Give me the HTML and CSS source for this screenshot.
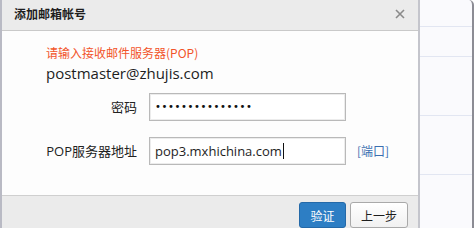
FILE: index.html
```html
<!DOCTYPE html>
<html>
<head>
<meta charset="utf-8">
<link rel="stylesheet" href="styles.css">
</head>
<body>
<div class="page">
  <div class="dialog">
    <div class="titlebar">
      <span class="title">添加邮箱帐号</span>
      <svg class="close" width="10" height="10" viewBox="0 0 10 10"><path d="M1 1L9 9M9 1L1 9" stroke="#8a8a8a" stroke-width="1.6" fill="none"/></svg>
    </div>
    <div class="content">
      <div class="hint">请输入接收邮件服务器(POP)</div>
      <div class="email">postmaster@zhujis.com</div>
      <div class="row first">
        <label class="label">密码</label>
        <div class="input"><span class="dots">•••••••••••••••</span></div>
      </div>
      <div class="row">
        <label class="label">POP服务器地址</label>
        <div class="input"><span class="val">pop3.mxhichina.com</span><span class="caret"></span></div>
        <a class="port">[端口]</a>
      </div>
    </div>
    <div class="footer">
      <button class="btn primary">验证</button>
      <button class="btn">上一步</button>
    </div>
  </div>
  <div class="side"></div>
</div>
</body>
</html>
```
FILE: styles.css
```css
html, body {
  margin: 0;
  padding: 0;
  background: #ffffff;
}
body {
  width: 475px;
  height: 228px;
  overflow: hidden;
  font-family: "Open Sans", "Noto Sans CJK SC", sans-serif;
  color: #222;
}
.page {
  display: flex;
  height: 228px;
}
.dialog {
  width: 416px;
  border-left: 2px solid #b9bac4;
  display: flex;
  flex-direction: column;
  flex-shrink: 0;
}
.titlebar {
  height: 30px;
  background: #ebebeb;
  border-bottom: 1px solid #c9c9c9;
  display: flex;
  align-items: center;
  justify-content: space-between;
  padding: 0 13px 0 12px;
}
.title {
  font-family: "Noto Sans CJK SC", sans-serif;
  font-size: 12px;
  font-weight: bold;
  color: #1e1e1e;
  position: relative;
  top: -1px;
}
.close {
  display: block;
  position: relative;
  top: -1px;
}
.content {
  height: 167px;
  background: #fdfdfd;
  padding: 14px 0 0 44px;
  box-sizing: border-box;
}
.hint {
  font-family: "Noto Sans CJK SC", sans-serif;
  font-size: 12px;
  line-height: 16px;
  color: #f2542a;
}
.email {
  font-size: 15px;
  line-height: 20px;
  margin-top: 2px;
  color: #1e1e1e;
}
.row {
  display: flex;
  align-items: center;
  margin-top: 16px;
}
.row.first {
  margin-top: 10px;
}
.label {
  width: 91px;
  text-align: right;
  font-family: "Open Sans", "Noto Sans CJK SC", sans-serif;
  font-size: 13px;
  color: #222;
  margin-right: 12px;
}
.input {
  width: 197px;
  height: 28px;
  box-sizing: border-box;
  border: 1px solid #b9b9b9;
  box-shadow: inset 0 0 0 1px #ececec;
  background: #fff;
  display: flex;
  align-items: center;
  padding-left: 5px;
  font-size: 13px;
  color: #1e1e1e;
}
.dots {
  font-family: "DejaVu Sans", sans-serif;
  font-size: 10px;
  letter-spacing: 0.6px;
  color: #111;
}
.caret {
  display: inline-block;
  width: 1px;
  height: 16px;
  background: #111;
  margin-left: 1px;
}
.port {
  font-family: "Noto Sans CJK SC", sans-serif;
  font-size: 12px;
  color: #3a6fb0;
  margin-left: 11px;
}
.footer {
  flex: 1;
  background: #ebebeb;
  border-top: 1px solid #cfcfcf;
  display: flex;
  justify-content: flex-end;
  align-items: flex-start;
  padding: 6px 10px 0 0;
  gap: 4px;
}
.btn {
  font-family: "Noto Sans CJK SC", sans-serif;
  font-size: 12px;
  height: 26px;
  padding: 0;
  width: 58px;
  border: 1px solid #a9a9a9;
  border-radius: 3px;
  background: linear-gradient(#ffffff, #f1f1f1);
  color: #1e1e1e;
}
.btn.primary {
  width: 47px;
  background: #2d7ec4;
  border-color: #2469a8;
  color: #fff;
}
.side {
  flex: 1;
  border-left: 2px solid #c4c5cc;
  border-right: 2px solid #8c8c94;
  border-top-right-radius: 5px;
  margin-right: 1px;
  background-color: #fafafd;
  background-image: repeating-linear-gradient(to bottom, transparent 0, transparent 28.5px, #e2e6f2 28.5px, #e2e6f2 29.5px);
  background-position: 0 -2px;
}
```
